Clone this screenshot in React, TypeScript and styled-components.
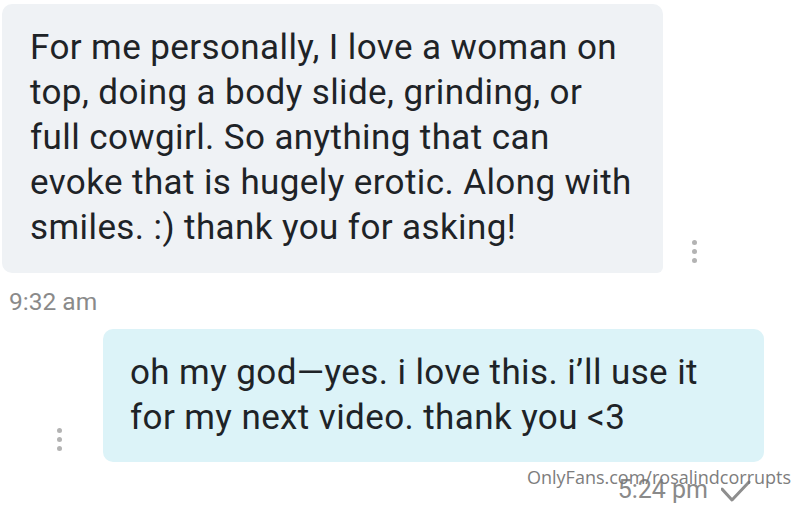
import React from "react";
import styled, { createGlobalStyle } from "styled-components";

const Global = createGlobalStyle`
  html, body { margin: 0; padding: 0; background: #ffffff; }
  body { width: 800px; height: 510px; overflow: hidden; }
`;

const Page = styled.div`
  position: relative;
  width: 800px;
  height: 510px;
  box-sizing: border-box;
  padding: 4px 0 0 2px;
  display: flex;
  flex-direction: column;
  font-family: Roboto, "Liberation Sans", sans-serif;
`;

const Row = styled.div<{ $out?: boolean }>`
  display: flex;
  align-items: flex-end;
  justify-content: ${(p) => (p.$out ? "flex-end" : "flex-start")};
  gap: ${(p) => (p.$out ? "41px" : "29px")};
  padding-right: ${(p) => (p.$out ? "36px" : "0")};
  margin-top: ${(p) => (p.$out ? "13px" : "0")};
`;

const Bubble = styled.div<{ $out?: boolean }>`
  width: 661px;
  box-sizing: border-box;
  padding: ${(p) => (p.$out ? "21px 20px 22px 27px" : "21px 20px 23px 28px")};
  background: ${(p) => (p.$out ? "#dcf3f8" : "#eff2f5")};
  border-radius: ${(p) => (p.$out ? "10px" : "10px 10px 6px 10px")};
  color: #1e2327;
  font-size: 35px;
  line-height: 45px;
  letter-spacing: 0.4px;
`;

const Line = styled.div`
  white-space: nowrap;
`;

const DotsWrap = styled.div<{ $mb: number }>`
  display: flex;
  flex-direction: column;
  gap: 4px;
  margin-bottom: ${(p) => p.$mb}px;
`;

const Dot = styled.span`
  width: 5px;
  height: 5px;
  border-radius: 50%;
  background: #b3b3b3;
`;

const Dots = ({ mb }: { mb: number }) => (
  <DotsWrap $mb={mb}>
    <Dot />
    <Dot />
    <Dot />
  </DotsWrap>
);

const Time = styled.div`
  margin: 15px 0 0 7px;
  font-size: 24.5px;
  line-height: 28px;
  color: #8a8a8a;
`;

const Footer = styled.div`
  display: flex;
  justify-content: flex-end;
  align-items: center;
  gap: 13px;
  padding-right: 49px;
  margin-top: 14px;
  font-size: 25px;
  line-height: 28px;
  color: #8a8a8a;
`;

const Watermark = styled.div`
  position: absolute;
  left: 527px;
  top: 465px;
  font-family: "Open Sans", "Liberation Sans", sans-serif;
  font-size: 18px;
  line-height: 24px;
  color: #777777;
  opacity: 0.95;
  white-space: nowrap;
`;

const Check = () => (
  <svg width="30" height="24" viewBox="0 0 30 24" style={{ marginTop: "4px" }}>
    <path d="M1 9 L11 20 L28 2" fill="none" stroke="#8e8e8e" strokeWidth="3" strokeLinecap="round" strokeLinejoin="round" />
  </svg>
);

export default function App() {
  return (
    <Page>
      <Global />
      <Row>
        <Bubble>
          <Line>For me personally, I love a woman on</Line>
          <Line>top, doing a body slide, grinding, or</Line>
          <Line>full cowgirl. So anything that can</Line>
          <Line>evoke that is hugely erotic. Along with</Line>
          <Line>smiles. :) thank you for asking!</Line>
        </Bubble>
        <Dots mb={10} />
      </Row>
      <Time>9:32 am</Time>
      <Row $out>
        <Dots mb={11} />
        <Bubble $out>
          <Line>oh my god—yes. i love this. i’ll use it</Line>
          <Line>for my next video. thank you &lt;3</Line>
        </Bubble>
      </Row>
      <Footer>
        <span>5:24 pm</span>
        <Check />
      </Footer>
      <Watermark>OnlyFans.com/rosalindcorrupts</Watermark>
    </Page>
  );
}
